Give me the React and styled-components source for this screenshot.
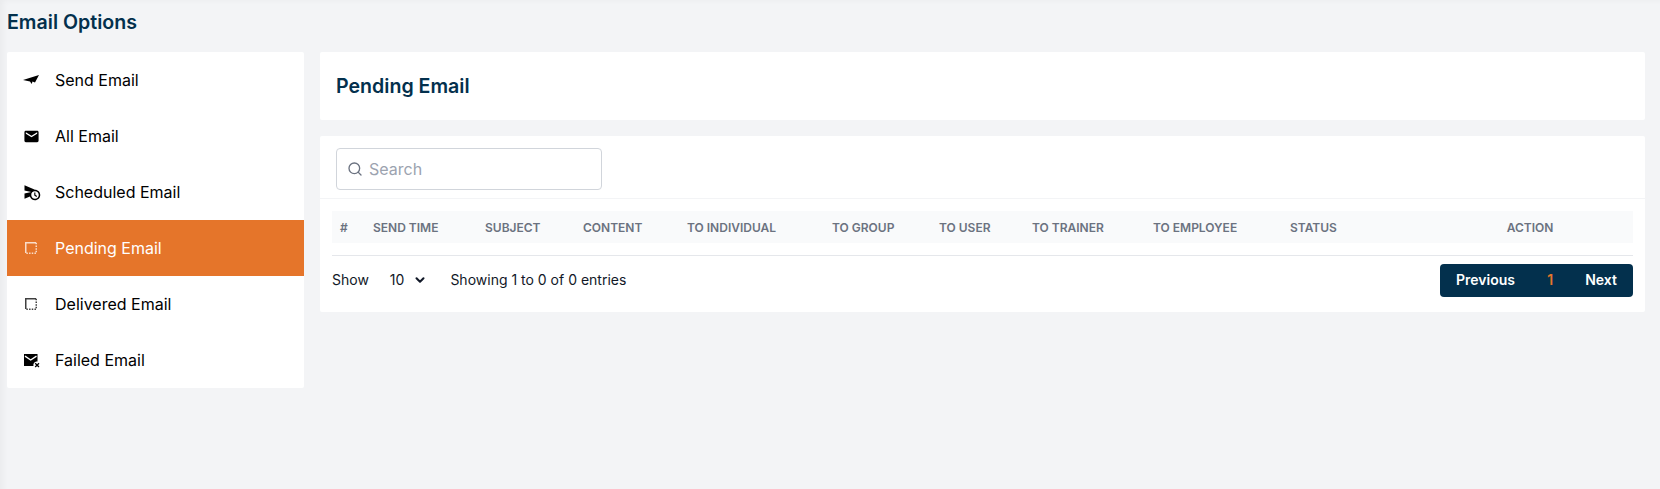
import React from 'react';
import styled, { createGlobalStyle } from 'styled-components';
import { Search, ChevronDown } from 'lucide-react';
import { MdEmail, MdScheduleSend } from 'react-icons/md';

const GlobalStyle = createGlobalStyle`
  html, body {
    margin: 0;
    padding: 0;
    height: 100%;
    background: #f3f4f6;
    font-family: Inter, "Noto Sans", sans-serif;
  }
  * {
    box-sizing: border-box;
  }
`;

const PlaneIcon = () => (
  <svg width="18" height="18" viewBox="0 0 18 18" fill="currentColor">
    <path d="M0 9 16 4 12 11.500 9.500 10.500 8.700 13 7 10.500Z" />
  </svg>
);

const DashedSquareIcon = () => (
  <svg width="18" height="18" viewBox="0 0 18 18" fill="none" stroke="currentColor" strokeWidth="1.5" strokeOpacity="0.75">
    <path d="M2.750 14V3.750H13" />
    <path d="M13.250 3.750V14.250H2.750" strokeDasharray="1.500 1.200" />
  </svg>
);

const MailXIcon = () => (
  <svg width="18" height="18" viewBox="0 0 18 18" fill="currentColor">
    <path d="M1 3h13.500v7.500h-1a3.500 3.500 0 0 0-3 4.500H1Z" />
    <path d="M2 5.200 7.700 9 13.500 5.200" fill="none" stroke="#fff" strokeWidth="1.400" />
    <path d="M12.200 12.200 16 16M16 12.200 12.200 16" fill="none" stroke="currentColor" strokeWidth="1.300" />
  </svg>
);

const menu = [
  { label: 'Send Email', icon: <PlaneIcon /> },
  { label: 'All Email', icon: <MdEmail size={17} /> },
  { label: 'Scheduled Email', icon: <MdScheduleSend size={18} /> },
  { label: 'Pending Email', icon: <DashedSquareIcon />, active: true },
  { label: 'Delivered Email', icon: <DashedSquareIcon /> },
  { label: 'Failed Email', icon: <MailXIcon /> },
];

const columns = [
  'SEND TIME',
  'SUBJECT',
  'CONTENT',
  'TO INDIVIDUAL',
  'TO GROUP',
  'TO USER',
  'TO TRAINER',
  'TO EMPLOYEE',
  'STATUS',
];

const App = () => {
  return (
    <Page>
      <GlobalStyle />
      <PageTitle>Email Options</PageTitle>
      <Layout>
        <Sidebar>
          {menu.map((item) => (
            <MenuItem key={item.label} active={item.active}>
              <MenuIcon>{item.icon}</MenuIcon>
              {item.label}
            </MenuItem>
          ))}
        </Sidebar>
        <Content>
          <HeaderCard>
            <HeaderTitle>Pending Email</HeaderTitle>
          </HeaderCard>
          <TableCard>
            <SearchRow>
              <SearchBox>
                <Search size={16} color="#6b7280" />
                <SearchInput placeholder="Search" />
              </SearchBox>
            </SearchRow>
            <TableArea>
              <HeadRow>
                <HeadCell>#</HeadCell>
                {columns.map((col) => (
                  <HeadCell key={col}>{col}</HeadCell>
                ))}
                <HeadCell center>ACTION</HeadCell>
              </HeadRow>
              <Footer>
                <Entries>
                  <span>Show</span>
                  <PageSize>
                    10
                    <ChevronDown size={14} strokeWidth={3.5} />
                  </PageSize>
                  <span>Showing 1 to 0 of 0 entries</span>
                </Entries>
                <Pager>
                  <PagerButton>Previous</PagerButton>
                  <PagerButton current>1</PagerButton>
                  <PagerButton>Next</PagerButton>
                </Pager>
              </Footer>
            </TableArea>
          </TableCard>
        </Content>
      </Layout>
    </Page>
  );
};

export default App;

const Page = styled.div`
  min-height: 489px;
  padding: 11px 15px 0 7px;
  box-shadow: inset 7px 4px 6px -4px rgba(0, 0, 0, 0.04);
`;

const PageTitle = styled.h1`
  margin: 0 0 19px;
  font-size: 19.6px;
  line-height: 22px;
  font-weight: 600;
  color: #03304d;
`;

const Layout = styled.div`
  display: flex;
  align-items: flex-start;
  gap: 16px;
`;

const Sidebar = styled.nav`
  width: 297px;
  flex-shrink: 0;
  background: #fff;
  border-radius: 2px;
`;

const MenuItem = styled.div`
  display: flex;
  align-items: center;
  height: 56px;
  padding-left: 16px;
  font-size: 16px;
  color: ${(props) => (props.active ? '#fff' : '#000')};
  background: ${(props) => (props.active ? '#e5752a' : 'transparent')};
`;

const MenuIcon = styled.span`
  display: flex;
  width: 32px;
  flex-shrink: 0;
`;

const Content = styled.main`
  flex: 1;
  display: flex;
  flex-direction: column;
  gap: 16px;
`;

const HeaderCard = styled.div`
  display: flex;
  align-items: center;
  height: 68px;
  padding: 0 16px;
  background: #fff;
  border-radius: 2px;
`;

const HeaderTitle = styled.h2`
  margin: 0;
  font-size: 19.6px;
  font-weight: 600;
  color: #03304d;
`;

const TableCard = styled.div`
  height: 176px;
  background: #fff;
  border-radius: 2px;
`;

const SearchRow = styled.div`
  height: 63px;
  padding: 12px 16px 0;
  border-bottom: 1px solid #f3f4f6;
`;

const SearchBox = styled.label`
  display: flex;
  align-items: center;
  gap: 6px;
  width: 266px;
  height: 42px;
  padding: 0 10px;
  border: 1px solid #d1d5db;
  border-radius: 4px;
`;

const SearchInput = styled.input`
  flex: 1;
  min-width: 0;
  border: 0;
  outline: 0;
  padding: 0;
  font: 400 16px Inter, sans-serif;
  &::placeholder {
    color: #9ca3af;
  }
`;

const TableArea = styled.div`
  padding: 12px 12px 0;
`;

const HeadRow = styled.div`
  display: grid;
  grid-template-columns: 33px 112px 98px 104px 145px 107px 93px 121px 137px 145px 206px;
  align-items: center;
  height: 32px;
  background: #f9fafb;
`;

const HeadCell = styled.div`
  padding-left: ${(props) => (props.center ? '0' : '8px')};
  font-size: 12px;
  font-weight: 600;
  color: #6b7280;
  text-align: ${(props) => (props.center ? 'center' : 'left')};
`;

const Footer = styled.div`
  display: flex;
  align-items: center;
  justify-content: space-between;
  height: 42px;
  margin-top: 12px;
  padding-top: 8px;
  border-top: 1px solid #e5e7eb;
`;

const Entries = styled.div`
  display: flex;
  align-items: center;
  margin-top: -2px;
  font-size: 14px;
  color: #111827;
`;

const PageSize = styled.span`
  display: flex;
  align-items: center;
  gap: 9px;
  margin: 0 23px 0 21px;
`;

const Pager = styled.div`
  display: flex;
  align-items: center;
  justify-content: space-between;
  width: 193px;
  height: 33px;
  padding: 0 16px 2px;
  background: #03304d;
  border-radius: 4px;
`;

const PagerButton = styled.span`
  font-size: 14px;
  font-weight: 600;
  color: ${(props) => (props.current ? '#e5752a' : '#fff')};
`;
